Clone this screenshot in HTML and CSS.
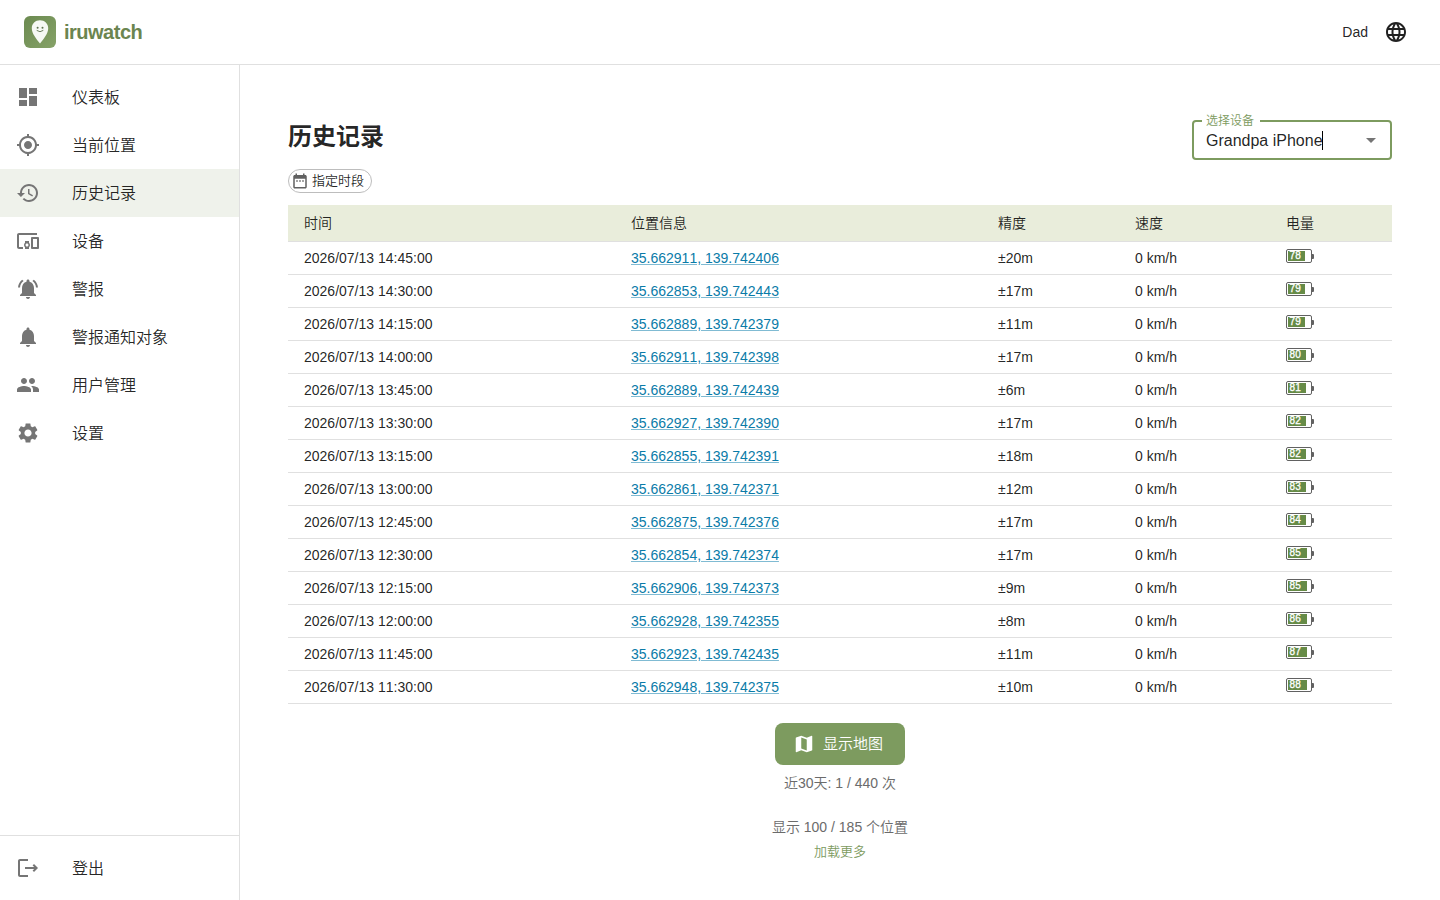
FILE: index.html
```html
<!DOCTYPE html>
<html lang="zh-CN">
<head>
<meta charset="utf-8">
<title>iruwatch</title>
<link rel="stylesheet" href="styles.css">
</head>
<body>
<header class="topbar">
  <div class="brand">
    <svg class="brand-logo" viewBox="0 0 32 32">
      <defs><linearGradient id="g" x1="0" y1="0" x2="1" y2="1"><stop offset="0" stop-color="#6b8a50"/><stop offset="1" stop-color="#86a268"/></linearGradient></defs>
      <rect width="32" height="32" rx="6" fill="url(#g)"/>
      <path d="M16 4.200c-4.600 0-8.200 3.500-8.200 8 0 5.300 4.500 10.500 8.200 15.300 3.700-4.800 8.200-10 8.200-15.300 0-4.500-3.600-8-8.200-8z" fill="#f6f9f4"/>
      <circle cx="13.600" cy="11.700" r="1" fill="#5f7350"/><circle cx="18.500" cy="11.700" r="1" fill="#5f7350"/>
      <path d="M13 14.600q3 2.500 6 0" fill="none" stroke="#5f7350" stroke-width=".9" stroke-linecap="round"/>
    </svg>
    <span class="brand-name">iruwatch</span>
  </div>
  <div class="account">
    <span>Dad</span>
    <svg class="icon" viewBox="0 0 24 24"><path d="M11.990 2C6.470 2 2 6.480 2 12s4.470 10 9.990 10C17.520 22 22 17.520 22 12S17.520 2 11.990 2zm6.930 6h-2.950c-.32-1.250-.78-2.450-1.380-3.560 1.840.63 3.370 1.910 4.330 3.560zM12 4.040c.83 1.200 1.480 2.530 1.910 3.960h-3.820c.43-1.430 1.080-2.760 1.910-3.960zM4.260 14C4.100 13.360 4 12.690 4 12s.1-1.360.26-2h3.380c-.08.66-.14 1.320-.14 2s.06 1.340.14 2H4.260zm.82 2h2.950c.32 1.250.78 2.450 1.380 3.560-1.840-.63-3.370-1.900-4.330-3.560zm2.950-8H5.080c.96-1.660 2.490-2.930 4.330-3.560C8.810 5.550 8.350 6.750 8.030 8zM12 19.960c-.83-1.200-1.480-2.530-1.910-3.960h3.820c-.43 1.430-1.080 2.760-1.910 3.960zM14.340 14H9.660c-.09-.66-.16-1.320-.16-2s.07-1.350.16-2h4.680c.09.65.16 1.320.16 2s-.07 1.340-.16 2zm.25 5.560c.6-1.110 1.060-2.310 1.380-3.560h2.950c-.96 1.650-2.490 2.930-4.330 3.560zM16.360 14c.08-.66.14-1.320.14-2s-.06-1.340-.14-2h3.380c.16.64.26 1.310.26 2s-.1 1.360-.26 2h-3.380z"/></svg>
  </div>
</header>
<div class="shell">
  <nav class="sidebar">
    <div class="menu">
      <a class="item"><svg class="icon" viewBox="0 0 24 24"><path d="M3 13h8V3H3v10zm0 8h8v-6H3v6zm10 0h8V11h-8v10zm0-18v6h8V3h-8z"/></svg><span>仪表板</span></a>
      <a class="item"><svg class="icon" viewBox="0 0 24 24"><path d="M12 8c-2.210 0-4 1.790-4 4s1.790 4 4 4 4-1.790 4-4-1.790-4-4-4zm8.940 3c-.46-4.170-3.770-7.480-7.940-7.940V1h-2v2.060C6.830 3.520 3.520 6.830 3.060 11H1v2h2.060c.46 4.170 3.770 7.480 7.940 7.940V23h2v-2.060c4.170-.46 7.480-3.770 7.940-7.940H23v-2h-2.060zM12 19c-3.870 0-7-3.130-7-7s3.130-7 7-7 7 3.130 7 7-3.130 7-7 7z"/></svg><span>当前位置</span></a>
      <a class="item selected"><svg class="icon" viewBox="0 0 24 24"><path d="M13 3c-4.970 0-9 4.030-9 9H1l3.890 3.890.07.14L9 12H6c0-3.870 3.130-7 7-7s7 3.130 7 7-3.130 7-7 7c-1.930 0-3.680-.79-4.940-2.060l-1.420 1.420C8.270 19.990 10.510 21 13 21c4.970 0 9-4.030 9-9s-4.030-9-9-9zm-1 5v5l4.280 2.540.72-1.210-3.500-2.080V8H12z"/></svg><span>历史记录</span></a>
      <a class="item"><svg class="icon" viewBox="0 0 24 24"><path d="M3 6h18V4H3c-1.100 0-2 .9-2 2v12c0 1.100.9 2 2 2h4v-2H3V6zm10 6H9v1.780c-.61.55-1 1.330-1 2.220s.39 1.670 1 2.220V20h4v-1.780c.61-.55 1-1.340 1-2.220s-.39-1.670-1-2.220V12zm-2 5.500c-.83 0-1.500-.67-1.500-1.500s.67-1.500 1.500-1.500 1.500.67 1.500 1.500-.67 1.500-1.500 1.500zM22 8h-6c-.5 0-1 .5-1 1v10c0 .5.5 1 1 1h6c.5 0 1-.5 1-1V9c0-.5-.5-1-1-1zm-1 10h-4v-8h4v8z"/></svg><span>设备</span></a>
      <a class="item"><svg class="icon" viewBox="0 0 24 24"><path d="M7.580 4.080 6.150 2.650C3.750 4.480 2.170 7.300 2.030 10.500h2c.15-2.650 1.510-4.970 3.550-6.420zm12.390 6.420h2c-.15-3.200-1.730-6.020-4.120-7.850l-1.420 1.430c2.020 1.450 3.390 3.770 3.540 6.420zM18 11c0-3.070-1.640-5.640-4.500-6.320V4c0-.83-.67-1.500-1.500-1.500s-1.500.67-1.500 1.500v.68C7.630 5.360 6 7.920 6 11v5l-2 2v1h16v-1l-2-2v-5zm-6 11c.14 0 .27-.01.4-.04.65-.14 1.180-.58 1.440-1.180.1-.24.15-.5.15-.78h-4c.01 1.100.9 2 2.010 2z"/></svg><span>警报</span></a>
      <a class="item"><svg class="icon" viewBox="0 0 24 24"><path d="M12 22c1.100 0 2-.9 2-2h-4c0 1.100.89 2 2 2zm6-6v-5c0-3.070-1.640-5.640-4.500-6.320V4c0-.83-.67-1.500-1.500-1.500s-1.500.67-1.500 1.500v.68C7.630 5.360 6 7.920 6 11v5l-2 2v1h16v-1l-2-2z"/></svg><span>警报通知对象</span></a>
      <a class="item"><svg class="icon" viewBox="0 0 24 24"><path d="M16 11c1.660 0 2.990-1.340 2.990-3S17.660 5 16 5s-3 1.340-3 3 1.340 3 3 3zm-8 0c1.660 0 2.990-1.340 2.990-3S9.660 5 8 5 5 6.340 5 8s1.340 3 3 3zm0 2c-2.330 0-7 1.170-7 3.500V19h14v-2.500c0-2.330-4.670-3.500-7-3.500zm8 0c-.29 0-.62.02-.97.05 1.160.84 1.970 1.970 1.970 3.450V19h6v-2.500c0-2.330-4.670-3.500-7-3.500z"/></svg><span>用户管理</span></a>
      <a class="item"><svg class="icon" viewBox="0 0 24 24"><path d="M19.140 12.940c.04-.3.06-.61.06-.94 0-.32-.02-.64-.07-.94l2.030-1.580c.18-.14.23-.41.12-.61l-1.920-3.320c-.12-.22-.37-.29-.59-.22l-2.390.96c-.5-.38-1.030-.7-1.620-.94l-.36-2.540c-.04-.24-.24-.41-.48-.41h-3.840c-.24 0-.43.17-.47.41l-.36 2.540c-.59.24-1.130.57-1.620.94l-2.390-.96c-.22-.08-.47 0-.59.22L2.740 8.870c-.12.21-.08.47.12.61l2.030 1.580c-.05.3-.09.63-.09.94s.02.64.07.94l-2.030 1.580c-.18.14-.23.41-.12.61l1.920 3.320c.12.22.37.29.59.22l2.390-.96c.5.38 1.030.7 1.620.94l.36 2.540c.05.24.24.41.48.41h3.840c.24 0 .44-.17.47-.41l.36-2.540c.59-.24 1.130-.56 1.620-.94l2.390.96c.22.08.47 0 .59-.22l1.920-3.320c.12-.22.07-.47-.12-.61l-2.010-1.580zM12 15.600c-1.980 0-3.600-1.620-3.600-3.600s1.620-3.600 3.600-3.600 3.600 1.620 3.600 3.600-1.620 3.600-3.600 3.600z"/></svg><span>设置</span></a>
    </div>
    <div class="menu-bottom">
      <a class="item"><svg class="icon" viewBox="0 0 24 24"><path d="m18 8-1.410 1.410L18.170 11H9v2h9.170l-1.580 1.580L18 16l4-4-4-4z"/><path d="M4 5h8V3H4c-1.100 0-2 .9-2 2v14c0 1.100.9 2 2 2h8v-2H4V5z"/></svg><span>登出</span></a>
    </div>
  </nav>
  <main class="content">
    <div class="heading">
      <h1>历史记录</h1>
      <fieldset class="select">
        <legend>选择设备</legend>
        <div class="select-value"><span class="input-text">Grandpa iPhone</span><svg class="icon" viewBox="0 0 24 24"><path d="M7 10l5 5 5-5z"/></svg></div>
      </fieldset>
    </div>
    <div class="chip"><svg class="icon" viewBox="0 0 24 24"><path d="M9 11H7v2h2v-2zm4 0h-2v2h2v-2zm4 0h-2v2h2v-2zm2-7h-1V2h-2v2H8V2H6v2H5c-1.110 0-1.990.9-1.990 2L3 20c0 1.100.89 2 2 2h14c1.100 0 2-.9 2-2V6c0-1.100-.9-2-2-2zm0 16H5V9h14v11z"/></svg>指定时段</div>
    <table class="history">
      <colgroup><col class="c-time"><col class="c-loc"><col class="c-acc"><col class="c-speed"><col></colgroup>
      <thead><tr><th>时间</th><th>位置信息</th><th>精度</th><th>速度</th><th>电量</th></tr></thead>
      <tbody>
        <tr><td>2026/07/13 14:45:00</td><td><a>35.662911, 139.742406</a></td><td>±20m</td><td>0 km/h</td><td><div class="battery"><i style="width:78%"></i><b>78</b></div></td></tr>
        <tr><td>2026/07/13 14:30:00</td><td><a>35.662853, 139.742443</a></td><td>±17m</td><td>0 km/h</td><td><div class="battery"><i style="width:79%"></i><b>79</b></div></td></tr>
        <tr><td>2026/07/13 14:15:00</td><td><a>35.662889, 139.742379</a></td><td>±11m</td><td>0 km/h</td><td><div class="battery"><i style="width:79%"></i><b>79</b></div></td></tr>
        <tr><td>2026/07/13 14:00:00</td><td><a>35.662911, 139.742398</a></td><td>±17m</td><td>0 km/h</td><td><div class="battery"><i style="width:80%"></i><b>80</b></div></td></tr>
        <tr><td>2026/07/13 13:45:00</td><td><a>35.662889, 139.742439</a></td><td>±6m</td><td>0 km/h</td><td><div class="battery"><i style="width:81%"></i><b>81</b></div></td></tr>
        <tr><td>2026/07/13 13:30:00</td><td><a>35.662927, 139.742390</a></td><td>±17m</td><td>0 km/h</td><td><div class="battery"><i style="width:82%"></i><b>82</b></div></td></tr>
        <tr><td>2026/07/13 13:15:00</td><td><a>35.662855, 139.742391</a></td><td>±18m</td><td>0 km/h</td><td><div class="battery"><i style="width:82%"></i><b>82</b></div></td></tr>
        <tr><td>2026/07/13 13:00:00</td><td><a>35.662861, 139.742371</a></td><td>±12m</td><td>0 km/h</td><td><div class="battery"><i style="width:83%"></i><b>83</b></div></td></tr>
        <tr><td>2026/07/13 12:45:00</td><td><a>35.662875, 139.742376</a></td><td>±17m</td><td>0 km/h</td><td><div class="battery"><i style="width:84%"></i><b>84</b></div></td></tr>
        <tr><td>2026/07/13 12:30:00</td><td><a>35.662854, 139.742374</a></td><td>±17m</td><td>0 km/h</td><td><div class="battery"><i style="width:85%"></i><b>85</b></div></td></tr>
        <tr><td>2026/07/13 12:15:00</td><td><a>35.662906, 139.742373</a></td><td>±9m</td><td>0 km/h</td><td><div class="battery"><i style="width:85%"></i><b>85</b></div></td></tr>
        <tr><td>2026/07/13 12:00:00</td><td><a>35.662928, 139.742355</a></td><td>±8m</td><td>0 km/h</td><td><div class="battery"><i style="width:86%"></i><b>86</b></div></td></tr>
        <tr><td>2026/07/13 11:45:00</td><td><a>35.662923, 139.742435</a></td><td>±11m</td><td>0 km/h</td><td><div class="battery"><i style="width:87%"></i><b>87</b></div></td></tr>
        <tr><td>2026/07/13 11:30:00</td><td><a>35.662948, 139.742375</a></td><td>±10m</td><td>0 km/h</td><td><div class="battery"><i style="width:88%"></i><b>88</b></div></td></tr>
      </tbody>
    </table>
    <div class="footer">
      <button class="map-button"><svg class="icon" viewBox="0 0 24 24"><path d="m20.500 3-.16.03L15 5.100 9 3 3.360 4.900c-.21.07-.36.25-.36.48V20.500c0 .28.22.5.5.5l.16-.03L9 18.900l6 2.100 5.640-1.900c.21-.07.36-.25.36-.48V3.500c0-.28-.22-.5-.5-.5zM15 19l-6-2.110V5l6 2.110V19z"/></svg>显示地图</button>
      <div class="quota">近30天: 1 / 440 次</div>
      <div class="count">显示 100 / 185 个位置</div>
      <a class="more">加载更多</a>
    </div>
  </main>
</div>
</body>
</html>
```
FILE: styles.css
```css
* { box-sizing: border-box; }
body {
  margin: 0;
  height: 900px;
  overflow: hidden;
  display: flex;
  flex-direction: column;
  font: 350 14px/20px "Liberation Sans", "Noto Sans CJK SC", sans-serif;
  font-kerning: none;
  color: rgba(0, 0, 0, .87);
  background: #fff;
}
.icon { width: 24px; height: 24px; flex: none; fill: currentColor; }
.topbar {
  height: 65px;
  flex: none;
  display: flex;
  align-items: center;
  justify-content: space-between;
  padding: 0 32px 0 24px;
  border-bottom: 1px solid #e0e0e0;
}
.brand { display: flex; align-items: center; gap: 8px; }
.brand-logo { width: 32px; height: 32px; }
.brand-name { font-size: 20px; font-weight: 700; line-height: 32px; letter-spacing: -.5px; color: #6b8550; }
.account { display: flex; align-items: center; gap: 16px; }
.shell { flex: 1; min-height: 0; display: flex; }
.sidebar {
  width: 240px;
  flex: none;
  display: flex;
  flex-direction: column;
  justify-content: space-between;
  border-right: 1px solid #e0e0e0;
}
.menu { padding-top: 8px; }
.menu-bottom { padding: 8px 0; border-top: 1px solid #e0e0e0; }
.item { display: flex; align-items: center; gap: 32px; height: 48px; padding: 0 16px; font-size: 16px; line-height: 24px; }
.item span { padding-top: 1px; }
.item .icon { color: #757575; }
.selected { background: #eff2eb; }
.content { flex: 1; padding: 48px 48px 0; }
.heading { display: flex; justify-content: space-between; height: 56px; }
h1 { margin: 8px 0 0; font-size: 24px; line-height: 32px; font-weight: 700; }
.select {
  width: 200px;
  height: 45px;
  margin: 2px 0 0;
  padding: 0 10px;
  border: 2px solid #7d9b5f;
  border-radius: 4px;
}
.select legend { margin-left: -2px; padding: 0 6px 0 4px; font-size: 12px; line-height: 12px; color: #7d9b5f; }
.select-value { display: flex; align-items: center; justify-content: space-between; height: 27px; margin-right: -3px; padding-left: 2px; font-size: 16px; }
.select-value .icon { color: #757575; margin-bottom: 2px; }
.input-text { line-height: 18px; margin-right: -1px; padding-top: 1px; box-shadow: inset -1px 0 #000; }
.chip {
  width: 84px;
  height: 24px;
  display: flex;
  align-items: center;
  gap: 3px;
  padding-left: 2px;
  border: 1px solid #bdbdbd;
  border-radius: 12px;
  font-size: 13px;
}
.chip .icon { width: 18px; height: 18px; color: #616161; }
.history { width: 1104px; margin-top: 12px; table-layout: fixed; border-collapse: separate; border-spacing: 0; }
.c-time { width: 327px; }
.c-loc { width: 367px; }
.c-acc { width: 137px; }
.c-speed { width: 151px; }
th, td { padding: 6px 16px; border-bottom: 1px solid #e0e0e0; text-align: left; font-weight: 350; }
th { height: 37px; background: #e9eddb; line-height: 24px; }
td { height: 33px; }
td a { color: #0a7ba8; text-decoration: underline; text-decoration-color: rgba(2, 119, 168, .5); }
.battery {
  position: relative;
  width: 26px;
  height: 14px;
  margin-bottom: 4px;
  padding: 1px;
  border: 1px solid #616161;
  border-radius: 2px;
}
.battery::after { content: ""; position: absolute; left: 25px; top: 4px; width: 2px; height: 5px; background: #616161; border-radius: 0 1px 1px 0; }
.battery i { display: block; height: 10px; background: #668b47; }
.battery b { position: absolute; left: 2.500px; top: 0; font-size: 10px; font-weight: 400; line-height: 12px; letter-spacing: .2px; color: #fff; -webkit-text-stroke: .3px #fff; }
.footer { display: flex; flex-direction: column; align-items: center; padding-top: 19px; color: #6b6b6b; }
.map-button {
  width: 130px;
  height: 42px;
  display: flex;
  align-items: center;
  gap: 8px;
  padding: 0 18px;
  border: 0;
  border-radius: 8px;
  background: #7d9b5f;
  color: #fff;
  font: 350 15px/26px "Liberation Sans", "Noto Sans CJK SC", sans-serif;
}
.map-button .icon { width: 22px; height: 22px; }
.quota { margin-top: 8px; }
.count { margin-top: 24px; }
.more { margin-top: 5px; font-size: 13px; color: #7d9b5f; }
```
